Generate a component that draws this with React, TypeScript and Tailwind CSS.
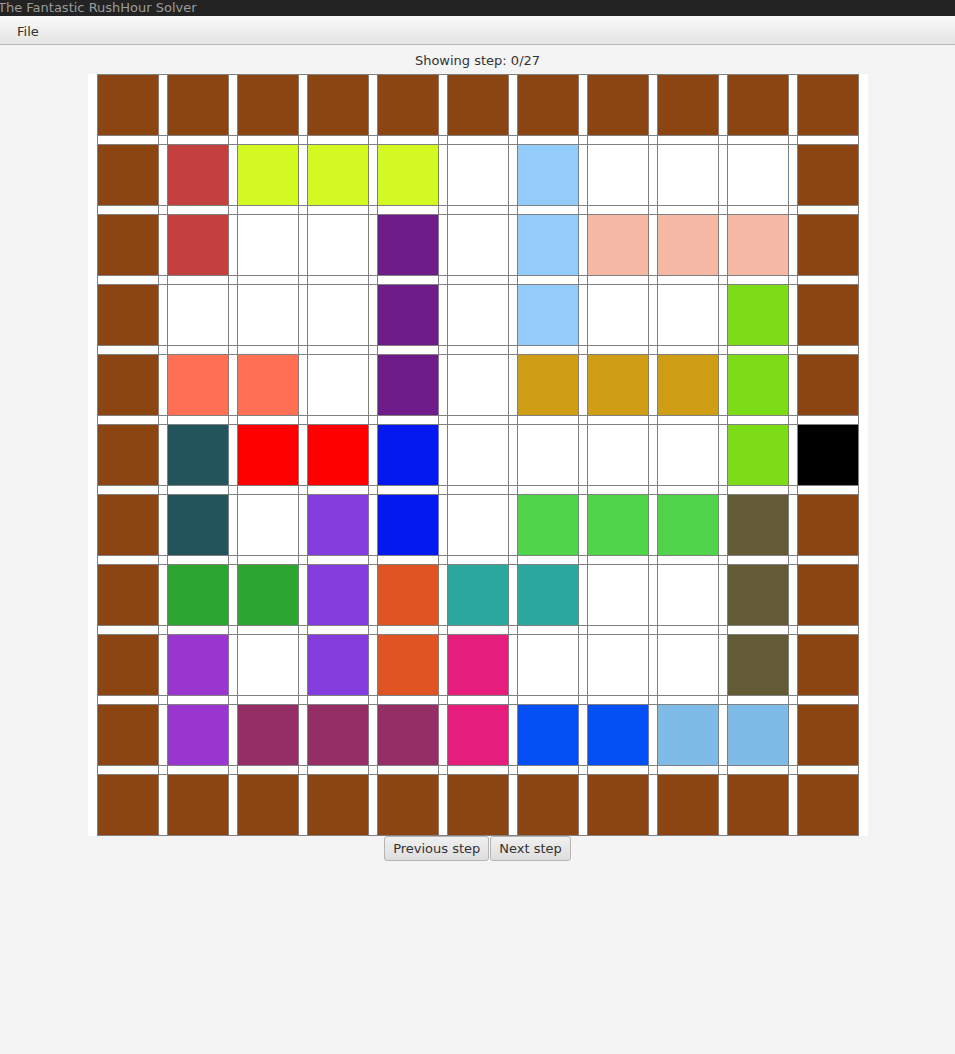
const BR = "bg-[#8b4513]";
const W = "bg-white";
const RD = "bg-[#c4403e]";
const YG = "bg-[#d2fa22]";
const LB = "bg-[#93cbfa]";
const PU = "bg-[#6f1c8b]";
const PE = "bg-[#f4b8a5]";
const GR = "bg-[#7cdc17]";
const CO = "bg-[#ff7055]";
const GO = "bg-[#cf9e14]";
const DT = "bg-[#23545c]";
const RR = "bg-[#ff0000]";
const BL = "bg-[#0419f0]";
const BK = "bg-black";
const VI = "bg-[#843ddc]";
const LG = "bg-[#50d449]";
const OL = "bg-[#625b36]";
const DG = "bg-[#2ca631]";
const OR = "bg-[#e05322]";
const TE = "bg-[#2ca99e]";
const MP = "bg-[#9936d0]";
const PK = "bg-[#e41e7a]";
const PL = "bg-[#952d66]";
const BB = "bg-[#0550f5]";
const SK = "bg-[#7ebce7]";

const board: string[][] = [
  [BR, BR, BR, BR, BR, BR, BR, BR, BR, BR, BR],
  [BR, RD, YG, YG, YG, W, LB, W, W, W, BR],
  [BR, RD, W, W, PU, W, LB, PE, PE, PE, BR],
  [BR, W, W, W, PU, W, LB, W, W, GR, BR],
  [BR, CO, CO, W, PU, W, GO, GO, GO, GR, BR],
  [BR, DT, RR, RR, BL, W, W, W, W, GR, BK],
  [BR, DT, W, VI, BL, W, LG, LG, LG, OL, BR],
  [BR, DG, DG, VI, OR, TE, TE, W, W, OL, BR],
  [BR, MP, W, VI, OR, PK, W, W, W, OL, BR],
  [BR, MP, PL, PL, PL, PK, BB, BB, SK, SK, BR],
  [BR, BR, BR, BR, BR, BR, BR, BR, BR, BR, BR],
];

const Board = () => {
  const items = [];
  for (let r = 0; r < 21; r++) {
    for (let c = 0; c < 21; c++) {
      const key = `${r}-${c}`;
      if (r % 2 === 0 && c % 2 === 0) {
        items.push(<div key={key} className={`border border-[#808080] ${board[r / 2][c / 2]}`} />);
      } else if (r % 2 === 0) {
        // vertical gap between two cells
        items.push(<div key={key} className="border-y border-[#808080] bg-white" />);
      } else if (c % 2 === 0) {
        // horizontal gap under a cell
        items.push(<div key={key} className="border-x border-[#808080] bg-white" />);
      } else {
        items.push(<div key={key} className="bg-white" />);
      }
    }
  }
  return (
    <div className="mx-auto w-[780px] bg-white px-[9px]">
      <div className="grid grid-cols-[repeat(10,62px_8px)_62px] grid-rows-[repeat(10,62px_8px)_62px]">{items}</div>
    </div>
  );
};

export default function App() {
  return (
    <div className="flex h-[1054px] w-[955px] flex-col bg-[#f4f4f4] font-['DejaVu_Sans',sans-serif] text-[13px] text-[#333]">
      <div className="flex h-4 items-center bg-[#232323] text-[13px] leading-none text-[#9c9c9c]">
        <span className="-ml-[2px] -mt-[1px]">The Fantastic RushHour Solver</span>
      </div>
      <div className="flex h-[29px] items-center border-b border-[#b8b8b8] bg-gradient-to-b from-[#fafafa] to-[#e4e4e4] pl-[17px] pt-[3px]">
        File
      </div>
      <p className="pt-[8px] pb-[6px] text-center leading-[15px]">Showing step: 0/27</p>
      <Board />
      <div className="flex justify-center gap-[1px]">
        <button className="h-[25px] rounded-[3px] border border-[#b5b5b5] bg-gradient-to-b from-[#f0f0f0] to-[#dedede] px-[8px] text-[13px] text-[#333]">
          Previous step
        </button>
        <button className="h-[25px] rounded-[3px] border border-[#b5b5b5] bg-gradient-to-b from-[#f0f0f0] to-[#dedede] px-[8px] text-[13px] text-[#333]">
          Next step
        </button>
      </div>
    </div>
  );
}
